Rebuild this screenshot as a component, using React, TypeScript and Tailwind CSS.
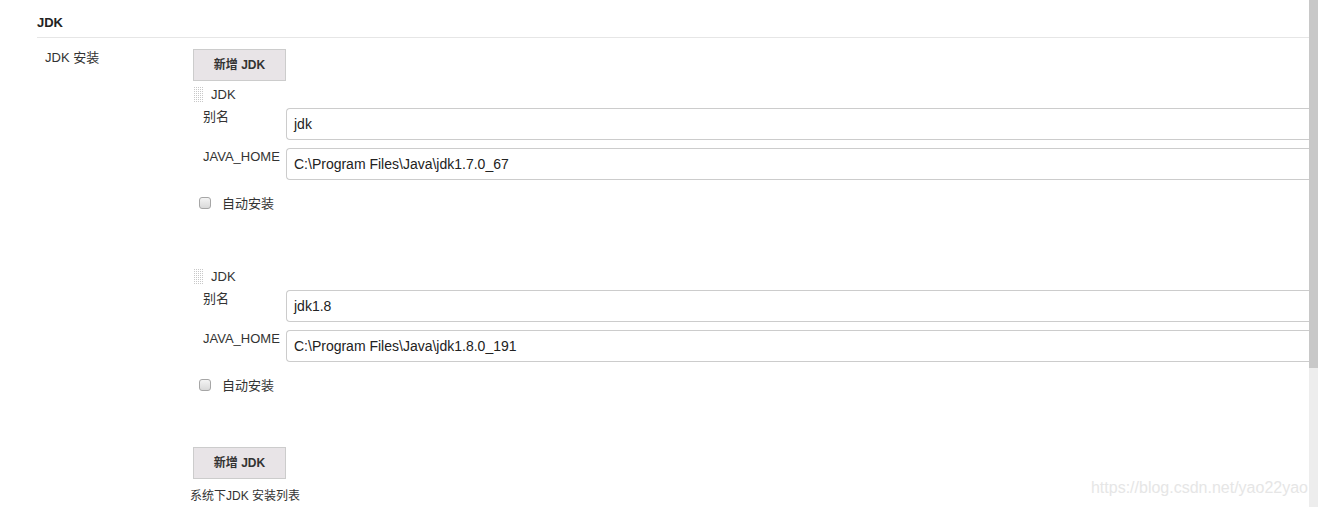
import React from "react";

const FONT = { fontFamily: '"Liberation Sans", Arial, "Noto Sans CJK SC", sans-serif' };

const DragHandle = () => (
  <svg width="11" height="16" viewBox="0 0 11 16" className="shrink-0">
    {Array.from({ length: 8 }).map((_, r) =>
      Array.from({ length: 5 }).map((_, c) => (
        <rect key={`${r}-${c}`} x={c * 2 + 1} y={r * 2} width="1" height="1" fill="#c8c8c8" />
      ))
    )}
  </svg>
);

const AddButton = () => (
  <button className="w-[93px] h-[32px] bg-[#e8e4e7] border border-[#cccccc] text-[12px] font-bold text-[#333333] flex items-center justify-center">
    新增 JDK
  </button>
);

interface FieldProps {
  label: string;
  value: string;
}

const Field: React.FC<FieldProps> = ({ label, value }) => (
  <div className="flex">
    <div className="w-[93px] pl-[10px] pt-[1px] text-[13px] leading-[16px] text-[#333333] shrink-0">{label}</div>
    <div className="flex-1 h-[32px] border border-[#cccccc] rounded-l-[4px] border-r-0 flex items-center pl-[7px] text-[14px] text-[#222222]">
      {value}
    </div>
  </div>
);

interface JdkBlockProps {
  alias: string;
  home: string;
}

const JdkBlock: React.FC<JdkBlockProps> = ({ alias, home }) => (
  <div className="flex flex-col">
    <div className="flex items-center h-[16px] gap-[7px]">
      <DragHandle />
      <span className="text-[13px] text-[#333333]">JDK</span>
    </div>
    <div className="mt-[5px]">
      <Field label="别名" value={alias} />
    </div>
    <div className="mt-[8px]">
      <Field label="JAVA_HOME" value={home} />
    </div>
    <div className="flex items-center mt-[16px] h-[14px] pl-[6px]">
      <span className="w-[12px] h-[12px] rounded-[3px] border border-[#a6a6a6] bg-gradient-to-b from-[#f4f4f4] to-[#d9d9d9]" />
      <span className="ml-[11px] text-[13px] text-[#333333] leading-[16px] mt-[2px]">自动安装</span>
    </div>
  </div>
);

export default function App() {
  return (
    <div className="flex h-[507px] overflow-hidden bg-white relative" style={FONT}>
      <div className="flex-1 min-w-0 overflow-hidden pl-[37px]">
        <div className="h-[38px] border-b border-[#e6e6e6] flex items-end pb-[6px]">
          <span className="text-[13px] font-bold text-[#222222] leading-[16px]">JDK</span>
        </div>
        <div className="flex">
          <div className="w-[156px] shrink-0 pl-[8px] pt-[12px] text-[13px] leading-[16px] text-[#333333]">
            JDK 安装
          </div>
          <div className="flex-1 min-w-0 flex flex-col pt-[11px]">
            <AddButton />
            <div className="mt-[6px]">
              <JdkBlock alias="jdk" home="C:\Program Files\Java\jdk1.7.0_67" />
            </div>
            <div className="mt-[59px]">
              <JdkBlock alias="jdk1.8" home="C:\Program Files\Java\jdk1.8.0_191" />
            </div>
            <div className="mt-[55px]">
              <AddButton />
            </div>
            <div className="mt-[10px] -ml-[3px] text-[12px] text-[#333333] leading-[15px]">系统下JDK 安装列表</div>
          </div>
        </div>
      </div>
      <div className="w-[9px] shrink-0 bg-[#ededed] flex flex-col">
        <div className="h-[368px] bg-[#c8c8c8]" />
      </div>
      <div className="absolute right-[10px] top-[478px] text-[16px] text-[#e6e6e6] leading-[20px]">
        https://blog.csdn.net/yao22yao
      </div>
    </div>
  );
}
